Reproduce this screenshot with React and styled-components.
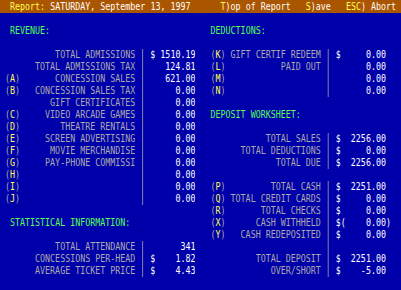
import React from 'react';
import styled, {createGlobalStyle} from 'styled-components';

// classic VGA text-mode palette
const C = {
    blue: '#0000aa',
    brown: '#aa5500',
    gray: '#aaaaaa',
    white: '#ffffff',
    yellow: '#ffff55',
    green: '#55ff55',
};

const GlobalStyle = createGlobalStyle`
  html, body {
    margin: 0;
    padding: 0;
    background: ${C.blue};
    overflow: hidden;
  }
`;

const Frame = styled.div`
  width: 401px;
  height: 290px;
  overflow: hidden;
  background: ${C.blue};
`;

// 80 columns of DejaVu Sans Mono, squeezed to the 5px cells of the old screen
const Screen = styled.div`
  width: 80ch;
  font-family: "DejaVu Sans Mono", "Liberation Mono", monospace;
  font-size: 11px;
  line-height: 12px;
  white-space: pre;
  color: ${C.gray};
  transform: scaleX(0.757);
  transform-origin: 0 0;
`;

const HeaderBar = styled.div`
  display: flex;
  height: 13px;
  line-height: 13px;
  padding-left: 2ch;
  background: ${C.brown};
  color: ${C.white};
`;

const Title = styled.div`
  width: 42ch;
  flex: none;
`;

const Menu = styled.div`
  display: flex;
  gap: 3ch;
`;

const Hot = styled.span`
  color: ${C.yellow};
`;

const Body = styled.div`
  display: flex;
`;

const Column = styled.div`
  display: flex;
  flex-direction: column;
  width: ${({$w}) => $w}ch;
  flex: none;
`;

const Row = styled.div`
  display: flex;
  height: 12px;
`;

const Heading = styled.div`
  padding-left: ${({$indent}) => $indent}ch;
  color: ${C.green};
`;

const Cell = styled.div`
  width: ${({$w = 1}) => $w}ch;
  flex: none;
  overflow: hidden;
`;

const KeyCell = styled(Cell)`
  color: ${C.gray};
`;

const Letter = styled.span`
  color: ${C.yellow};
`;

const Label = styled(Cell)`
  text-align: right;
  color: ${C.gray};
`;

const Divider = styled(Cell)`
  display: flex;
  justify-content: center;
  &::before {
    content: '';
    width: 1.32px;
    background: ${({$on}) => ($on ? C.gray : 'transparent')};
  }
`;

const Money = styled(Cell)`
  color: ${C.white};
`;

const Value = styled(Money)`
  text-align: right;
`;

const LEFT = {width: 41, labelW: 23, valueW: 7, indent: 2};
const RIGHT = {width: 39, labelW: 19, valueW: 8, indent: 1};

const line = (k, label, value, cur = false, extra = {}) => ({t: 'line', k, label, value, cur, ...extra});
const blank = {t: 'blank'};

const leftRows = [
    blank,
    {t: 'head', text: 'REVENUE:'},
    blank,
    line('', 'TOTAL ADMISSIONS', '1510.19', true),
    line('', 'TOTAL ADMISSIONS TAX', '124.81'),
    line('A', 'CONCESSION SALES', '621.00'),
    line('B', 'CONCESSION SALES TAX', '0.00'),
    line('', 'GIFT CERTIFICATES', '0.00'),
    line('C', 'VIDEO ARCADE GAMES', '0.00'),
    line('D', 'THEATRE RENTALS', '0.00'),
    line('E', 'SCREEN ADVERTISING', '0.00'),
    line('F', 'MOVIE MERCHANDISE', '0.00'),
    line('G', 'PAY-PHONE COMMISSI', '0.00'),
    line('H', '', '0.00'),
    line('I', '', '0.00'),
    line('J', '', '0.00'),
    blank,
    {t: 'head', text: 'STATISTICAL INFORMATION:'},
    blank,
    line('', 'TOTAL ATTENDANCE', '341'),
    line('', 'CONCESSIONS PER-HEAD', '1.82', true),
    line('', 'AVERAGE TICKET PRICE', '4.43', true),
];

const rightRows = [
    blank,
    {t: 'head', text: 'DEDUCTIONS:'},
    blank,
    line('K', 'GIFT CERTIF REDEEM', '0.00', true),
    line('L', 'PAID OUT', '0.00'),
    line('M', '', '0.00'),
    line('N', '', '0.00'),
    blank,
    {t: 'head', text: 'DEPOSIT WORKSHEET:'},
    blank,
    line('', 'TOTAL SALES', '2256.00', true),
    line('', 'TOTAL DEDUCTIONS', '0.00', true),
    line('', 'TOTAL DUE', '2256.00', true),
    blank,
    line('P', 'TOTAL CASH', '2251.00', true),
    line('Q', 'TOTAL CREDIT CARDS', '0.00', true),
    line('R', 'TOTAL CHECKS', '0.00', true),
    line('X', 'CASH WITHHELD', '0.00', true, {neg: true}),
    line('Y', 'CASH REDEPOSITED', '0.00', true),
    line('', '', ''),
    line('', 'TOTAL DEPOSIT', '2251.00', true),
    line('', 'OVER/SHORT', '-5.00', true),
];

const Line = ({row, side}) => (
    <Row>
        <Cell/>
        <KeyCell $w={3}>{row.k ? <>(<Letter>{row.k}</Letter>)</> : ' '}</KeyCell>
        <Label $w={side.labelW}>{row.label}</Label>
        <Cell/>
        <Divider $on/>
        <Cell/>
        <Money>{row.cur ? '$' : ' '}</Money>
        <Money>{row.neg ? '(' : ' '}</Money>
        <Value $w={side.valueW}>{row.value}</Value>
        <Money>{row.neg ? ')' : ' '}</Money>
    </Row>
);

const Side = ({rows, side}) => (
    <Column $w={side.width}>
        {rows.map((row, i) => {
            if (row.t === 'head') {
                return <Row key={i}><Heading $indent={side.indent}>{row.text}</Heading></Row>;
            }
            if (row.t === 'blank') {
                return <Row key={i}/>;
            }
            return <Line key={i} row={row} side={side}/>;
        })}
    </Column>
);

const App = () => {
    return (
        <>
            <GlobalStyle/>
            <Frame>
                <Screen>
                    <HeaderBar>
                        <Title><Hot>Report:</Hot> SATURDAY, September 13, 1997</Title>
                        <Menu>
                            <span><Hot>T</Hot>)op of Report</span>
                            <span><Hot>S</Hot>)ave</span>
                            <span><Hot>ESC</Hot>) Abort</span>
                        </Menu>
                    </HeaderBar>
                    <Body>
                        <Side rows={leftRows} side={LEFT}/>
                        <Side rows={rightRows} side={RIGHT}/>
                    </Body>
                </Screen>
            </Frame>
        </>
    );
};

export default App;
